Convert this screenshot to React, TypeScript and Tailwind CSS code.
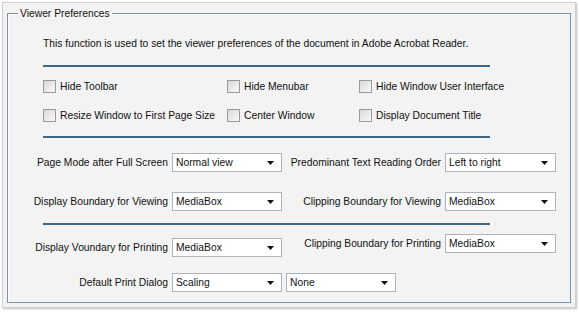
import React from "react";

const FONT = { fontFamily: '"Liberation Sans", Arial, sans-serif' };

type SelectProps = { value: string; width?: string };

const FakeSelect = ({ value, width = "w-[110px]" }: SelectProps) => (
  <div
    className={`${width} h-[19px] shrink-0 flex items-center justify-between border border-[#a9b4bf] bg-white pl-[3px] pr-[7px]`}
  >
    <span className="whitespace-nowrap text-[10.3px] leading-[13px] text-[#111]">{value}</span>
    <svg width="7" height="4" viewBox="0 0 7 4">
      <path d="M0 0h7L3.5 4z" fill="#111" />
    </svg>
  </div>
);

const Check = ({ label, width }: { label: string; width: string }) => (
  <label className={`${width} flex items-center gap-[4px] shrink-0`}>
    <span className="w-[13px] h-[13px] shrink-0 border border-[#9a9a9a] bg-gradient-to-br from-[#d8d8d8] to-[#fbfbfb]" />
    <span className="whitespace-nowrap text-[10.3px] leading-[13px] text-[#111]">{label}</span>
  </label>
);

const Separator = () => <div className="w-[447px] h-[2px] bg-[#3e6787]" />;

const Field = ({
  label,
  value,
  labelWidth,
  selectWidth,
}: {
  label: string;
  value: string;
  labelWidth: string;
  selectWidth?: string;
}) => (
  <div className="flex items-center gap-[4px]">
    <span
      className={`${labelWidth} shrink-0 whitespace-nowrap text-right text-[10.3px] leading-[13px] text-[#111]`}
    >
      {label}
    </span>
    <FakeSelect value={value} width={selectWidth} />
  </div>
);

export default function App() {
  return (
    <div className="w-[579px] h-[312px] bg-white pt-[2px] pl-[2px] pr-[3px] pb-[4px]" style={FONT}>
      <div className="h-full border border-[#cfcfcf] bg-[#f3f3f3] p-[4px] shadow-[1px_1px_2px_rgba(0,0,0,0.25)]">
        <fieldset className="h-full border border-[#7694ab] shadow-[inset_1px_1px_0_#fff]">
          <legend className="ml-[10px] px-[2px] text-[10.3px] leading-[13px] text-[#111]">
            Viewer Preferences
          </legend>

          <div className="flex flex-col">
            <div className="flex flex-col pl-[35px]">
              <p className="mt-[17px] whitespace-nowrap text-[10.3px] leading-[13px] text-[#111]">
                This function is used to set the viewer preferences of the document in Adobe Acrobat Reader.
              </p>
              <div className="mt-[15px]">
                <Separator />
              </div>
              <div className="mt-[13px] flex">
                <Check label="Hide Toolbar" width="w-[184px]" />
                <Check label="Hide Menubar" width="w-[132px]" />
                <Check label="Hide Window User Interface" width="w-[150px]" />
              </div>
              <div className="mt-[16px] flex">
                <Check label="Resize Window to First Page Size" width="w-[184px]" />
                <Check label="Center Window" width="w-[132px]" />
                <Check label="Display Document Title" width="w-[150px]" />
              </div>
              <div className="mt-[14px]">
                <Separator />
              </div>
            </div>

            <div className="mt-[15px] flex">
              <Field label="Page Mode after Full Screen" value="Normal view" labelWidth="w-[160px]" />
              <Field
                label="Predominant Text Reading Order"
                value="Left to right"
                labelWidth="w-[159px]"
                selectWidth="w-[111px]"
              />
            </div>

            <div className="mt-[20px] flex">
              <Field label="Display Boundary for Viewing" value="MediaBox" labelWidth="w-[160px]" />
              <Field
                label="Clipping Boundary for Viewing"
                value="MediaBox"
                labelWidth="w-[159px]"
                selectWidth="w-[111px]"
              />
            </div>

            <div className="mt-[12px] pl-[35px]">
              <Separator />
            </div>

            <div className="mt-[9px] flex items-start">
              <div className="mt-[4px]">
                <Field label="Display Voundary for Printing" value="MediaBox" labelWidth="w-[160px]" />
              </div>
              <Field
                label="Clipping Boundary for Printing"
                value="MediaBox"
                labelWidth="w-[159px]"
                selectWidth="w-[111px]"
              />
            </div>

            <div className="mt-[16px] flex items-center gap-[4px]">
              <Field label="Default Print Dialog" value="Scaling" labelWidth="w-[160px]" />
              <FakeSelect value="None" />
            </div>
          </div>
        </fieldset>
      </div>
    </div>
  );
}
